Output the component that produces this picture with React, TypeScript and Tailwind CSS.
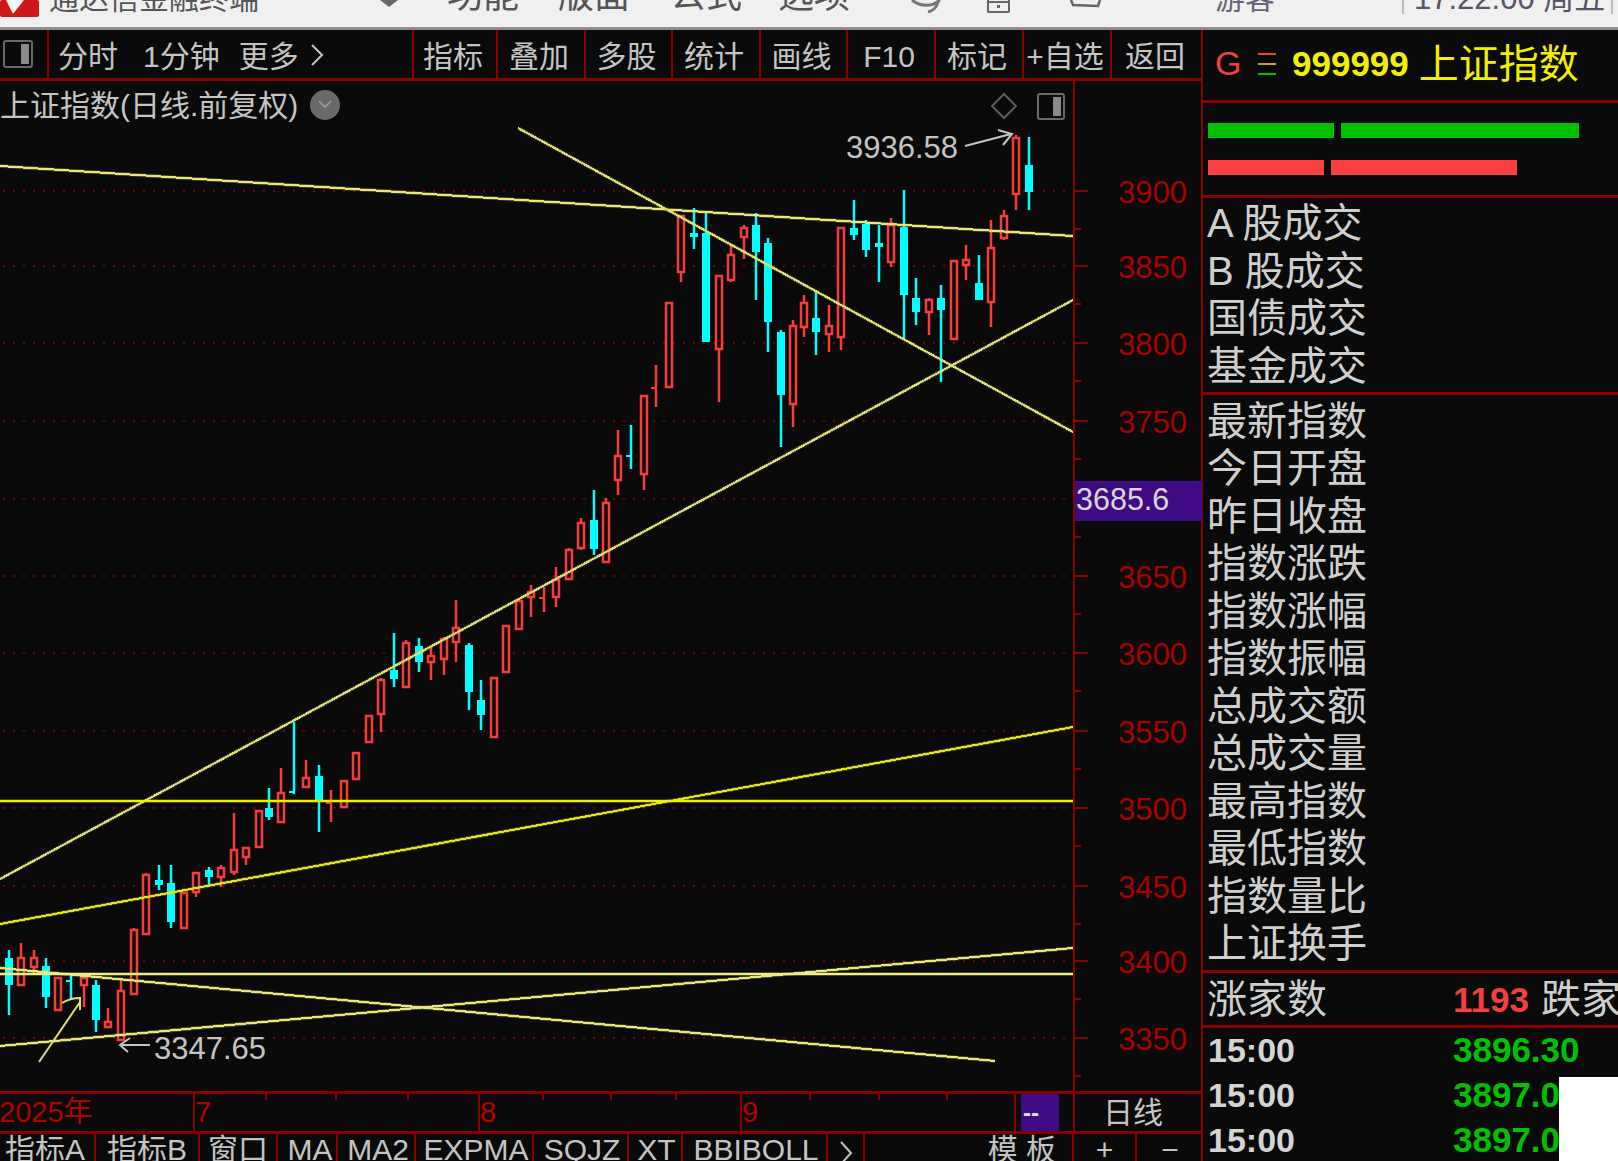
import React from "react"

const LINE = "#8a0000"
const BG = "#0a0a0a"

// x, high, low, bodyTop, bodyBottom, up
type Candle = [number, number, number, number, number, boolean]

const candles: Candle[] = [
  [9, 950, 1015, 958, 985, false], [21, 943, 985, 958, 985, true], [34, 950, 975, 958, 967, true],
  [46, 958, 1008, 966, 997, false], [58, 978, 1010, 978, 1010, true], [71, 975, 1000, 980, 982, false],
  [84, 975, 1007, 978, 985, true], [96, 980, 1032, 985, 1020, false], [108, 1008, 1027, 1022, 1027, true],
  [121, 980, 1040, 991, 1040, true], [134, 928, 994, 930, 994, true], [146, 873, 934, 875, 934, true],
  [159, 865, 890, 880, 885, false], [171, 865, 928, 883, 922, false], [184, 893, 928, 893, 928, true],
  [196, 873, 897, 873, 892, true], [209, 867, 885, 870, 877, false], [221, 865, 887, 868, 877, true],
  [234, 813, 875, 850, 872, true], [246, 848, 865, 848, 857, true], [259, 811, 847, 811, 847, true],
  [269, 788, 820, 808, 817, false], [281, 768, 822, 793, 822, true], [294, 722, 794, 791, 793, false],
  [306, 760, 787, 778, 787, true], [319, 765, 832, 776, 800, false], [331, 790, 822, 802, 804, true],
  [344, 781, 807, 781, 807, true], [356, 753, 779, 753, 779, true], [369, 716, 742, 716, 742, true],
  [381, 678, 732, 680, 714, true], [394, 633, 687, 670, 679, false], [406, 640, 687, 643, 687, true],
  [419, 638, 672, 646, 662, false], [431, 647, 680, 656, 662, true], [444, 637, 675, 639, 659, true],
  [456, 600, 662, 628, 642, true], [469, 643, 710, 645, 692, false], [481, 680, 730, 700, 715, false],
  [494, 678, 737, 678, 737, true], [506, 626, 672, 626, 672, true], [519, 601, 629, 601, 629, true],
  [531, 585, 617, 592, 597, true], [544, 587, 612, 597, 599, true], [556, 567, 607, 580, 597, true],
  [569, 548, 579, 550, 579, true], [581, 518, 550, 523, 548, true], [594, 490, 555, 520, 549, false],
  [606, 498, 562, 503, 562, true], [618, 430, 495, 456, 480, true], [631, 425, 469, 455, 457, false],
  [644, 396, 490, 396, 474, true], [656, 365, 407, 387, 389, true], [669, 303, 387, 303, 387, true],
  [681, 215, 282, 216, 272, true], [694, 208, 249, 233, 237, false], [706, 213, 342, 233, 342, false],
  [719, 276, 402, 276, 349, true], [731, 245, 282, 255, 280, true], [744, 225, 259, 228, 237, true],
  [756, 213, 300, 225, 252, false], [768, 238, 352, 243, 322, false], [781, 330, 447, 332, 395, false],
  [793, 320, 427, 326, 404, true], [804, 295, 337, 303, 327, true], [816, 292, 355, 318, 332, false],
  [829, 305, 352, 326, 334, true], [841, 228, 350, 228, 337, true], [854, 200, 240, 228, 235, false],
  [866, 220, 257, 224, 250, false], [879, 225, 282, 243, 247, false], [891, 218, 267, 225, 262, true],
  [904, 190, 340, 227, 295, false], [916, 278, 325, 298, 312, false], [929, 298, 335, 300, 312, true],
  [941, 285, 382, 298, 310, false], [954, 261, 339, 261, 339, true], [966, 245, 280, 260, 265, true],
  [979, 255, 300, 283, 300, false], [991, 220, 327, 248, 302, true], [1004, 210, 240, 216, 238, true],
  [1016, 135, 210, 138, 194, true], [1029, 137, 210, 165, 192, false],
]

const grid = [191, 266, 343, 421, 499, 576, 653, 731, 808, 886, 961, 1038]
const labels = ["3900", "3850", "3800", "3750", "", "3650", "3600", "3550", "3500", "3450", "3400", "3350"]

const trendLines = [
  { d: [0, 166, 1073, 236], c: "#e8e878" },
  { d: [518, 128, 1073, 432], c: "#e0e070" },
  { d: [0, 879, 1073, 300], c: "#dcdc78" },
  { d: [0, 924, 1073, 727], c: "#e4e420" },
  { d: [0, 1046, 1073, 948], c: "#e8e878" },
  { d: [0, 968, 995, 1061], c: "#e8e878" },
  { d: [0, 974, 1073, 974], c: "#f0f080" },
  { d: [0, 801, 1073, 801], c: "#f0f000" },
]

function Chart() {
  return (
    <svg viewBox="0 81 1203 1010" className="block w-[1203px] h-[1010px]">
      {grid.map((y) => (
        <line key={y} x1={3} x2={1070} y1={y} y2={y} stroke="#7a0000" strokeWidth={2} strokeDasharray="2 8" shapeRendering="crispEdges" />
      ))}

      {candles.map(([x, hi, lo, top, bottom, up]) => {
        const c = up ? "#f83c3c" : "#00ffff"
        return (
          <g key={x}>
            <line x1={x} x2={x} y1={hi} y2={top} stroke={c} strokeWidth={2.5} />
            <line x1={x} x2={x} y1={bottom} y2={lo} stroke={c} strokeWidth={2.5} />
            {bottom - top <= 2 ? (
              <rect x={x - 5} y={top} width={6} height={2} fill={c} />
            ) : up ? (
              <rect x={x - 3} y={top} width={6} height={bottom - top} fill={BG} stroke={c} strokeWidth={2.5} />
            ) : (
              <rect x={x - 4} y={top} width={8} height={bottom - top} fill={c} />
            )}
          </g>
        )
      })}

      {trendLines.map(({ d, c }, i) => (
        <g key={i}>
          <line x1={d[0]} y1={d[1]} x2={d[2]} y2={d[3]} stroke={c} strokeOpacity={0.35} strokeWidth={3.5} />
          <line x1={d[0]} y1={d[1]} x2={d[2]} y2={d[3]} stroke={c} strokeWidth={2} shapeRendering="crispEdges" />
        </g>
      ))}

      {/* small arrow, bottom left */}
      <path d="M39 1062 L80 1002 M62 1003 Q70 998 80 998 L80 1010" fill="none" stroke="#e0e070" strokeWidth={2} />

      {/* price notes */}
      <text x={846} y={158} fontSize={31} fill="#c4c4c4">3936.58</text>
      <path d="M965 146 L1011 134 M998 130 L1012 134 L1003 145" fill="none" stroke="#c4c4c4" strokeWidth={2} />
      <text x={154} y={1059} fontSize={31} fill="#c4c4c4">3347.65</text>
      <path d="M150 1045 L122 1045 M130 1038 L120 1045 L128 1052" fill="none" stroke="#c4c4c4" strokeWidth={2} />

      {/* price axis */}
      <line x1={1074} x2={1074} y1={81} y2={1091} stroke={LINE} strokeWidth={2} />
      {grid.map((y, i) => (
        <g key={y}>
          <line x1={1074} x2={1088} y1={y} y2={y} stroke={LINE} strokeWidth={2} />
          <line x1={1074} x2={1081} y1={y + 38} y2={y + 38} stroke={LINE} strokeWidth={2} />
          {labels[i] && (
            <text x={1187} y={y + 12} fontSize={31} textAnchor="end" fill="#a80000">{labels[i]}</text>
          )}
        </g>
      ))}
      <rect x={1075} y={481} width={127} height={40} fill="#3f0a85" />
      <text x={1076} y={510} fontSize={30.5} fill="#d8d8d8">3685.6</text>
    </svg>
  )
}

function SideToggle({ className }: { className: string }) {
  return (
    <div className={`flex justify-end border-2 border-[#6a6a6a] rounded-[3px] p-[2px] ${className}`}>
      <div className="w-[8px] h-full bg-[#8a8a8a]" />
    </div>
  )
}

const toolButtons = ["指标", "叠加", "多股", "统计", "画线", "F10", "标记", "+自选", "返回"]
const toolWidths = ["w-[84px]", "w-[88px]", "w-[87px]", "w-[88px]", "w-[87px]", "w-[88px]", "w-[88px]", "w-[88px]", "w-[92px]"]

function Toolbar() {
  return (
    <div className="flex h-[51px] shrink-0 border-b-[3px] border-[#8a0000] text-[30px] text-[#c4c4c4] leading-none">
      <div className="w-[49px] flex items-center pl-[3px] border-r-2 border-[#8a0000] shrink-0">
        <SideToggle className="w-[30px] h-[28px]" />
      </div>
      <div className="w-[363px] flex items-center pl-[9px] pt-[5px] shrink-0">
        <span>分时</span>
        <span className="ml-[25px]">1分钟</span>
        <span className="ml-[19px]">更多</span>
        <svg viewBox="0 0 14 24" className="w-[14px] h-[24px] ml-[11px] -mt-[3px]">
          <path d="M2 2 L12 12 L2 22" fill="none" stroke="#c4c4c4" strokeWidth={2} />
        </svg>
      </div>
      {toolButtons.map((t, i) => (
        <div key={t} className={`flex items-center justify-center pt-[5px] pr-[4px] border-l-2 border-[#8a0000] shrink-0 ${toolWidths[i]}`}>
          {t}
        </div>
      ))}
    </div>
  )
}

const dateTicks = [266, 336, 408, 543, 611, 676, 810, 879, 947]

function DateAxis() {
  return (
    <div className="relative flex h-[40px] shrink-0 border-t-[3px] border-[#8a0000] text-[29px] text-[#b00000] leading-none">
      <svg className="absolute left-0 top-0 w-[1074px] h-[6px]">
        {dateTicks.map((x) => (
          <line key={x} x1={x} x2={x} y1={0} y2={6} stroke="#8a0000" strokeWidth={2} />
        ))}
      </svg>
      <div className="w-[194px] flex items-center -ml-[1px]">2025年</div>
      <div className="w-[285px] flex items-center border-l-2 border-[#8a0000]">7</div>
      <div className="w-[262px] flex items-center border-l-2 border-[#8a0000]">8</div>
      <div className="w-[274px] flex items-center border-l-2 border-[#8a0000]">9</div>
      <div className="w-[7px] border-l-2 border-[#8a0000]" />
      <div className="w-[38px] bg-[#3f0a85] text-[#e0e0e0] flex items-center pl-[2px] font-bold text-[24px]">--</div>
      <div className="w-[14px]" />
      <div className="flex-1 flex items-center pl-[28px] border-l-2 border-[#8a0000] text-[30px] text-[#c4c4c4]">日线</div>
    </div>
  )
}

const tabs = [
  { t: "指标A", w: "w-[96px]", pad: "pr-[4px]" },
  { t: "指标B", w: "w-[104px]", pad: "" },
  { t: "窗口", w: "w-[78px]", pad: "" },
  { t: "MA", w: "w-[60px]", pad: "pl-[6px]" },
  { t: "MA2", w: "w-[78px]", pad: "pl-[4px]" },
  { t: "EXPMA", w: "w-[118px]", pad: "pl-[4px]" },
  { t: "SQJZ", w: "w-[95px]", pad: "pl-[3px]" },
  { t: "XT", w: "w-[54px]", pad: "pl-[3px]" },
  { t: "BBIBOLL", w: "w-[145px]", pad: "pl-[3px]" },
  { t: ">", w: "w-[37px]", pad: "" },
  { t: "模 板", w: "w-[209px]", pad: "text-right pr-[16px]" },
  { t: "+", w: "w-[63px]", pad: "" },
  { t: "−", w: "w-[66px]", pad: "" },
]

function BottomTabs() {
  return (
    <div className="flex flex-1 min-h-0 overflow-hidden border-t-[3px] border-[#8a0000] text-[30px] text-[#c4c4c4] leading-[32px] whitespace-nowrap">
      {tabs.map(({ t, w, pad }, i) => (
        <div key={i} className={`shrink-0 text-center border-r-2 border-[#8a0000] last:border-r-0 ${w} ${pad}`}>
          {t === ">" ? (
            <svg viewBox="0 0 14 24" className="block w-[14px] h-[26px] mx-auto mt-[6px]">
              <path d="M2 1 L12 12 L2 23" fill="none" stroke="#c4c4c4" strokeWidth={2} />
            </svg>
          ) : (
            t
          )}
        </div>
      ))}
    </div>
  )
}

const volumeRows = ["A 股成交", "B 股成交", "国债成交", "基金成交"]
const statRows = ["最新指数", "今日开盘", "昨日收盘", "指数涨跌", "指数涨幅", "指数振幅", "总成交额", "总成交量", "最高指数", "最低指数", "指数量比", "上证换手"]
const ticks = [
  ["15:00", "3896.30"],
  ["15:00", "3897.06"],
  ["15:00", "3897.06"],
]

function QuotePanel() {
  return (
    <div className="relative flex-1 min-w-0 flex flex-col overflow-hidden text-[#cfcfcf]">
      <div className="h-[73px] shrink-0 flex items-center pl-[12px] pb-[3px] border-b-[3px] border-[#8a0000] whitespace-nowrap">
        <span className="text-[34px] text-[#f04040] w-[43px]">G</span>
        <div className="w-[18px] flex flex-col gap-[8px] mr-[16px]">
          <div className="h-[2px] bg-[#f04040]" />
          <div className="h-[2px] bg-[#c0a040]" />
          <div className="h-[2px] bg-[#00c000]" />
        </div>
        <span className="text-[35px] font-bold text-[#f0f000] leading-none">999999</span>
        <span className="text-[40px] text-[#f0f000] leading-none ml-[10px]">上证指数</span>
      </div>

      <div className="h-[95px] shrink-0 flex flex-col justify-center gap-[22px] pl-[5px] border-b-[3px] border-[#8a0000]">
        <div className="flex gap-[7px]">
          <div className="w-[126px] h-[15px] bg-[#00c000]" />
          <div className="w-[238px] h-[15px] bg-[#00c000]" />
        </div>
        <div className="flex gap-[7px]">
          <div className="w-[116px] h-[15px] bg-[#ff4040]" />
          <div className="w-[186px] h-[15px] bg-[#ff4040]" />
        </div>
      </div>

      <div className="h-[197px] shrink-0 flex flex-col justify-center pl-[4px] border-b-[3px] border-[#8a0000] text-[40px] leading-[47.5px] whitespace-nowrap">
        {volumeRows.map((r) => (
          <div key={r} className="h-[47.5px]">{r}</div>
        ))}
      </div>

      <div className="h-[578px] shrink-0 flex flex-col justify-center pl-[4px] border-b-[3px] border-[#8a0000] text-[40px] leading-[47.5px] whitespace-nowrap">
        {statRows.map((r) => (
          <div key={r} className="h-[47.5px]">{r}</div>
        ))}
      </div>

      <div className="h-[55px] shrink-0 flex items-center pl-[4px] border-b-[3px] border-[#8a0000] text-[40px] leading-none whitespace-nowrap">
        <span className="w-[246px] shrink-0">涨家数</span>
        <span className="text-[35px] text-[#f04040] font-bold shrink-0">1193</span>
        <span className="ml-[12px] shrink-0">跌家数</span>
      </div>

      <div className="pl-[5px] -mt-[1px]">
        {ticks.map(([time, price], i) => (
          <div key={i} className="h-[45px] flex items-center font-bold text-[34px] leading-none whitespace-nowrap">
            <span className="w-[245px] shrink-0 text-[#d4d4d4]">{time}</span>
            <span className="text-[35px] text-[#00c000] shrink-0">{price}</span>
          </div>
        ))}
      </div>

      {/* white patch left over the window corner */}
      <div className="absolute right-0 bottom-0 w-[59px] h-[84px] bg-white" />
    </div>
  )
}

function TitleBar() {
  return (
    <div className="h-[30px] shrink-0 overflow-hidden bg-[#f0f0f0] border-b-[3px] border-[#8c8c8c]">
      <div className="flex items-end h-[14px] leading-none text-[#555] whitespace-nowrap">
        <svg viewBox="0 0 39 17" className="w-[39px] h-[17px] shrink-0 self-start">
          <rect width={39} height={17} fill="#d01818" rx={2} />
          <path d="M6 0 L24 0 L13 14 Z" fill="#f4f4f4" />
        </svg>
        <span className="ml-[10px] w-[331px] shrink-0 text-[30px]">通达信金融终端</span>
        <div className="w-[67px] shrink-0 h-[14px]">
          <svg viewBox="0 0 18 7" className="w-[18px] h-[7px]">
            <path d="M0 0 L18 0 L9 7 Z" fill="#666" />
          </svg>
        </div>
        <span className="w-[111px] shrink-0 text-[36px]">功能</span>
        <span className="w-[112px] shrink-0 text-[36px]">版面</span>
        <span className="w-[108px] shrink-0 text-[36px]">公式</span>
        <span className="w-[140px] shrink-0 text-[36px]">选项</span>
        <div className="w-[69px] shrink-0 h-[14px]">
          <svg viewBox="0 0 32 14" className="w-[32px] h-[14px] -ml-[8px]">
            <path d="M2 0 Q12 8 24 4 Q30 0 30 0 M28 2 Q26 10 18 12" fill="none" stroke="#777" strokeWidth={3} />
          </svg>
        </div>
        <div className="w-[81px] shrink-0 h-[14px]">
          <div className="w-[23px] h-[13px] border-2 border-[#666] border-t-0 rounded-b-[2px] flex flex-col items-center">
            <div className="w-full h-[2px] mt-[1px] bg-[#666]" />
            <div className="w-[3px] h-[3px] mt-[2px] bg-[#666]" />
          </div>
        </div>
        <div className="w-[147px] shrink-0 h-[14px]">
          <svg viewBox="0 0 34 8" className="w-[34px] h-[8px]">
            <path d="M3 0 L5 5 L30 6 L32 0" fill="none" stroke="#666" strokeWidth={2.5} />
          </svg>
        </div>
        <span className="w-[187px] shrink-0 text-[30px] text-[#667]">游客</span>
        <div className="h-[30px] self-end border-l-2 border-[#bbb] pl-[10px] w-[209px] shrink-0 text-[31px] text-[#556] flex items-end">17:22:00 周五</div>
        <div className="h-[30px] self-end border-l-2 border-[#bbb] flex-1" />
      </div>
    </div>
  )
}

export default function App() {
  return (
    <div className="w-[1618px] h-[1161px] overflow-hidden flex flex-col bg-[#0a0a0a] [font-family:'Liberation_Sans','Noto_Sans_CJK_SC',sans-serif]">
      <TitleBar />
      <div className="flex flex-1 min-h-0">
        <div className="relative w-[1203px] shrink-0 flex flex-col border-r-2 border-[#8a0000]">
          <Toolbar />
          <div className="relative h-[1010px] shrink-0">
            <Chart />
            {/* labels sitting over the chart */}
            <div className="absolute left-0 top-[10px] flex items-center text-[30px] text-[#c4c4c4] leading-none whitespace-nowrap">
              <span>上证指数(日线.前复权)</span>
              <div className="ml-[12px] -mt-[3px] w-[30px] h-[30px] rounded-full bg-[#6a6a6a] flex items-center justify-center">
                <svg viewBox="0 0 16 10" className="w-[14px] h-[9px]">
                  <path d="M1 1 L8 8 L15 1" fill="none" stroke="#9c9c9c" strokeWidth={2} />
                </svg>
              </div>
            </div>
            <div className="absolute left-[990px] top-[11px] flex items-center gap-[19px]">
              <svg viewBox="0 0 28 28" className="w-[28px] h-[28px]">
                <path d="M14 2 L26 14 L14 26 L2 14 Z" fill="none" stroke="#5c5c5c" strokeWidth={2} />
              </svg>
              <SideToggle className="w-[28px] h-[27px]" />
            </div>
          </div>
          <DateAxis />
          <BottomTabs />
        </div>
        <QuotePanel />
      </div>
    </div>
  )
}
